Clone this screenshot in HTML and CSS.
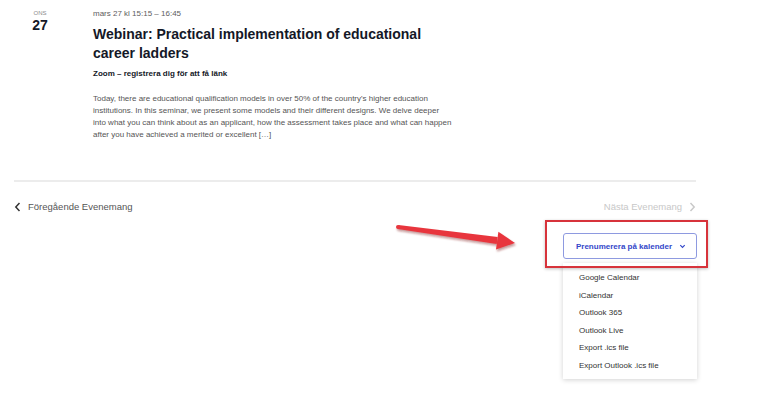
FILE: index.html
```html
<!DOCTYPE html>
<html lang="sv">
<head>
<meta charset="utf-8">
<title>Evenemang</title>
<link rel="stylesheet" href="styles.css">
</head>
<body>
<div class="page">
  <article class="event">
    <div class="date">
      <div class="dow">ONS</div>
      <div class="day">27</div>
    </div>
    <div class="details">
      <div class="when">mars 27 kl 15:15 – 16:45</div>
      <h2 class="title">Webinar: Practical implementation of educational career ladders</h2>
      <div class="venue">Zoom – registrera dig för att få länk</div>
      <p class="desc">Today, there are educational qualification models in over 50% of the country's higher education<br>institutions. In this seminar, we present some models and their different designs. We delve deeper<br>into what you can think about as an applicant, how the assessment takes place and what can happen<br>after you have achieved a merited or excellent [&hellip;]</p>
    </div>
  </article>

  <nav class="pager">
    <a class="prev"><svg class="chev" width="7" height="10" viewBox="0 0 7 10"><path d="M5.5 1 L1.8 5 L5.5 9" fill="none" stroke="#333" stroke-width="1.5"/></svg>Föregående Evenemang</a>
    <a class="next">Nästa Evenemang<svg class="chev" width="7" height="10" viewBox="0 0 7 10"><path d="M1.5 1 L5.2 5 L1.5 9" fill="none" stroke="#c9c9c9" stroke-width="1.5"/></svg></a>
  </nav>

  <div class="subscribe-row">
    <div class="subscribe">
      <button class="sub-btn">Prenumerera på kalender<svg class="down" width="7" height="5" viewBox="0 0 7 5"><path d="M1.3 1.2 L3.5 3.4 L5.7 1.2" fill="none" stroke="#3347c9" stroke-width="1.2"/></svg></button>
      <span class="highlight"></span>
      <ul class="menu">
        <li>Google Calendar</li>
        <li>iCalendar</li>
        <li>Outlook 365</li>
        <li>Outlook Live</li>
        <li>Export .ics file</li>
        <li>Export Outlook .ics file</li>
      </ul>
    </div>
  </div>

  <svg class="arrow" width="135" height="45" viewBox="0 0 135 45">
    <defs>
      <filter id="sh" x="-10%" y="-30%" width="130%" height="180%">
        <feDropShadow dx="1" dy="2" stdDeviation="1.2" flood-color="#7a1a1a" flood-opacity="0.45"/>
      </filter>
    </defs>
    <g filter="url(#sh)" fill="#e8363d">
      <polygon points="8.3,10 107.7,22.1 106.7,29.1 7.7,14"/>
      <circle cx="8" cy="12" r="2"/>
      <polygon points="108.4,16.7 125,28 106,34.5"/>
    </g>
  </svg>
</div>
</body>
</html>
```

FILE: styles.css
```css
* { box-sizing: border-box; }

html, body {
  margin: 0;
  padding: 0;
  background: #ffffff;
}

body {
  font-family: "Liberation Sans", Arial, sans-serif;
  color: #141827;
  width: 757px;
  height: 402px;
  overflow: hidden;
}

.page {
  position: relative;
  padding: 0 61px 0 14px;
}

.event {
  display: flex;
  padding-left: 18px;
  padding-bottom: 39px;
  border-bottom: 2px solid #ececec;
}

.date {
  width: 16px;
  margin-right: 45px;
  padding-top: 9px;
  text-align: center;
}

.dow {
  font-size: 6px;
  line-height: 8px;
  color: #8a8a8a;
}

.day {
  font-size: 14px;
  line-height: 16px;
  font-weight: 700;
  color: #141827;
}

.details {
  width: 366px;
  padding-top: 8px;
}

.when {
  font-size: 8px;
  line-height: 12px;
  color: #5d5d5d;
}

.title {
  margin: 5px 0 0;
  font-size: 14px;
  line-height: 19px;
  font-weight: 700;
  color: #141827;
}

.venue {
  margin-top: 5px;
  font-size: 8px;
  line-height: 12px;
  font-weight: 700;
  color: #141827;
}

.desc {
  width: 380px;
  margin: 13px 0 0;
  font-size: 8px;
  line-height: 12px;
  color: #555555;
}

.pager {
  display: flex;
  justify-content: space-between;
  align-items: center;
  margin-top: 19px;
  font-size: 9.5px;
  line-height: 12px;
}

.pager a {
  display: flex;
  align-items: center;
  gap: 7px;
}

.prev { color: #555555; }
.next { color: #c8c8c8; gap: 9px; }

.chev { display: block; }

.subscribe-row {
  display: flex;
  justify-content: flex-end;
  margin-top: 20px;
}

.subscribe {
  position: relative;
  width: 134px;
  margin-right: -1px;
}

.sub-btn {
  display: flex;
  align-items: center;
  justify-content: center;
  gap: 7px;
  width: 134px;
  height: 26px;
  padding: 0 0 0 2px;
  border: 1px solid #8e9ae0;
  border-radius: 3px;
  background: #ffffff;
  font-family: "Liberation Sans", Arial, sans-serif;
  font-size: 8px;
  font-weight: 700;
  color: #3347c9;
}

.down { display: block; }

.highlight {
  position: absolute;
  top: -13px;
  left: -18px;
  width: 163px;
  height: 48px;
  border: 2px solid #d7333b;
  box-shadow: 0 1px 3px rgba(0,0,0,0.25);
  pointer-events: none;
  z-index: 2;
}

.menu {
  position: absolute;
  top: 30px;
  left: 0;
  width: 134px;
  margin: 0;
  padding: 6px 0 4px 16px;
  list-style: none;
  background: #ffffff;
  box-shadow: 0 1px 5px rgba(0,0,0,0.18);
  font-size: 8px;
  line-height: 17.6px;
  color: #333333;
}

.arrow {
  position: absolute;
  left: 390px;
  top: 215px;
  overflow: visible;
}
```
